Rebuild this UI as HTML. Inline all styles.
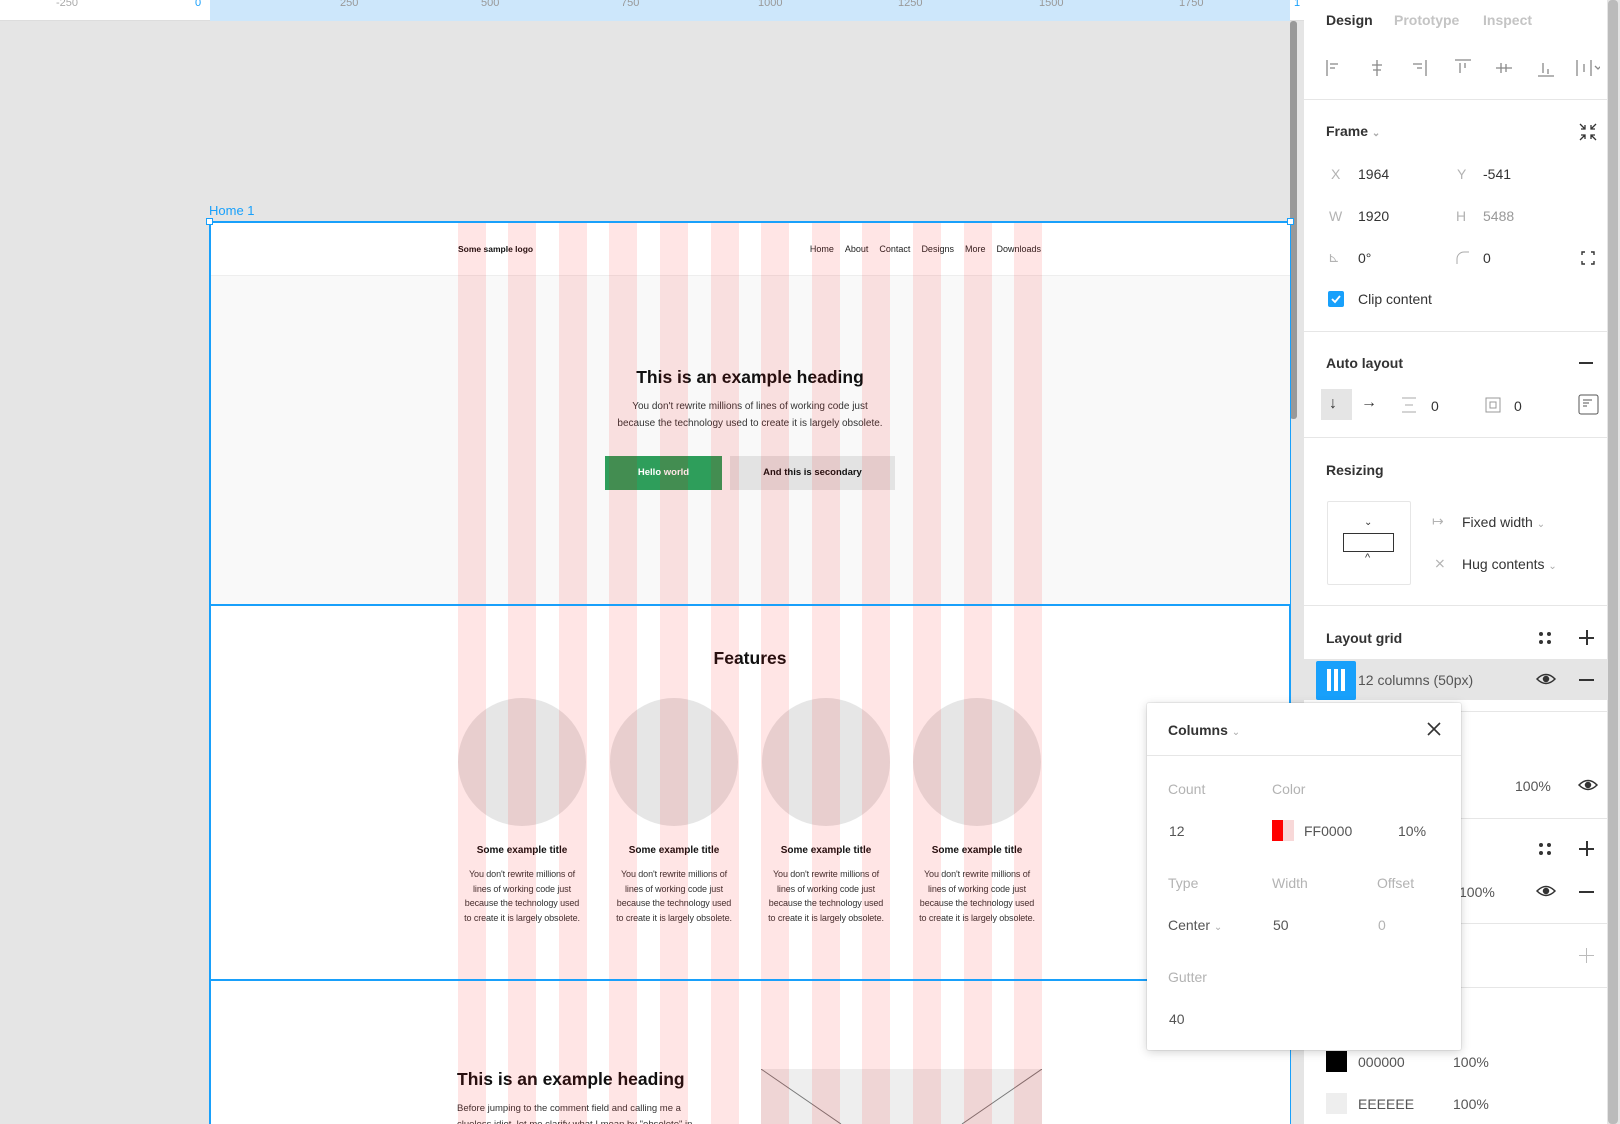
<!DOCTYPE html>
<html><head><meta charset="utf-8"><style>
*{margin:0;padding:0;box-sizing:border-box}
html,body{width:1620px;height:1124px;overflow:hidden;background:#e5e5e5}
body{font-family:"Liberation Sans",sans-serif}
#r{position:relative;width:1620px;height:1124px;overflow:hidden}
.a{position:absolute;white-space:nowrap}
.p{font-size:14px;color:#333}
.l{color:#b3b3b3}
.hr{position:absolute;left:1304px;width:303px;height:1px;background:#e6e6e6}
.col{position:absolute;top:221px;height:903px;width:28px;background:rgba(255,0,0,0.1)}
.ft{font-size:10px;font-weight:bold;color:#111;text-align:center;width:130px}
.fd{font-size:9px;color:#333;text-align:center;width:136px;line-height:14.5px;letter-spacing:-0.1px}
.nav span{margin-left:11px}
</style></head><body><div id="r">
<div class="a" style="left:0;top:0;width:1304px;height:21px;background:#fff;border-bottom:1px solid #ddd"></div>
<div class="a" style="left:210px;top:0;width:1080px;height:21px;background:#cde7fb"></div>
<div class="a" style="top:-3px;left:56px;font-size:11px;color:#aaa">-250</div>
<div class="a" style="top:-3px;left:195px;font-size:11px;color:#18a0fb">0</div>
<div class="a" style="top:-3px;left:340px;font-size:11px;color:#999">250</div>
<div class="a" style="top:-3px;left:481px;font-size:11px;color:#999">500</div>
<div class="a" style="top:-3px;left:621px;font-size:11px;color:#999">750</div>
<div class="a" style="top:-3px;left:758px;font-size:11px;color:#999">1000</div>
<div class="a" style="top:-3px;left:898px;font-size:11px;color:#999">1250</div>
<div class="a" style="top:-3px;left:1039px;font-size:11px;color:#999">1500</div>
<div class="a" style="top:-3px;left:1179px;font-size:11px;color:#999">1750</div>
<div class="a" style="top:-3px;left:1294px;font-size:11px;color:#18a0fb">1</div>
<div class="a" style="left:1290px;top:21px;width:7px;height:398px;background:#999;border-radius:3px"></div>

<div class="a" style="left:209px;top:203px;font-size:13px;color:#18a0fb">Home 1</div>
<div class="a" style="left:210px;top:221px;width:1080px;height:903px;background:#fff"></div>
<div class="a" style="left:210px;top:275px;width:1080px;height:329px;background:#f9f9f9;border-top:1px solid #eee"></div>
<div class="a" style="left:458px;top:244px;font-size:8.5px;font-weight:bold;color:#111">Some sample logo</div>
<div class="a nav" style="right:579px;top:244px;font-size:9px;color:#222">Home<span>About</span><span>Contact</span><span>Designs</span><span>More</span><span>Downloads</span></div>
<div class="a" style="left:550px;top:367px;width:400px;text-align:center;font-size:17.5px;font-weight:bold;color:#111">This is an example heading</div>
<div class="a" style="left:550px;top:399px;width:400px;text-align:center;font-size:10px;color:#333;line-height:16.5px">You don't rewrite millions of lines of working code just<br>because the technology used to create it is largely obsolete.</div>
<div class="a" style="left:605px;top:456px;width:117px;height:34px;background:#2e9e5b;color:#fff;font-size:9.5px;font-weight:bold;text-align:center;line-height:34px">Hello world</div>
<div class="a" style="left:730px;top:456px;width:165px;height:34px;background:#e3e3e3;color:#111;font-size:9.5px;font-weight:bold;text-align:center;line-height:34px">And this is secondary</div>

<div class="a" style="left:550px;top:648px;width:400px;text-align:center;font-size:17.5px;font-weight:bold;color:#111">Features</div>
<div class="a" style="left:458px;top:698px;width:128px;height:128px;border-radius:50%;background:#e6e6e6"></div>
<div class="a" style="left:610px;top:698px;width:128px;height:128px;border-radius:50%;background:#e6e6e6"></div>
<div class="a" style="left:762px;top:698px;width:128px;height:128px;border-radius:50%;background:#e6e6e6"></div>
<div class="a" style="left:913px;top:698px;width:128px;height:128px;border-radius:50%;background:#e6e6e6"></div>
<div class="a ft" style="left:457px;top:845px">Some example title</div>
<div class="a ft" style="left:609px;top:845px">Some example title</div>
<div class="a ft" style="left:761px;top:845px">Some example title</div>
<div class="a ft" style="left:912px;top:845px">Some example title</div>
<div class="a fd" style="left:454px;top:867px">You don't rewrite millions of<br>lines of working code just<br>because the technology used<br>to create it is largely obsolete.</div>
<div class="a fd" style="left:606px;top:867px">You don't rewrite millions of<br>lines of working code just<br>because the technology used<br>to create it is largely obsolete.</div>
<div class="a fd" style="left:758px;top:867px">You don't rewrite millions of<br>lines of working code just<br>because the technology used<br>to create it is largely obsolete.</div>
<div class="a fd" style="left:909px;top:867px">You don't rewrite millions of<br>lines of working code just<br>because the technology used<br>to create it is largely obsolete.</div>

<div class="a" style="left:457px;top:1069px;font-size:17.5px;font-weight:bold;color:#111">This is an example heading</div>
<div class="a" style="left:457px;top:1101px;height:23px;overflow:hidden;font-size:9.5px;color:#333;line-height:16px">Before jumping to the comment field and calling me a<br>clueless idiot, let me clarify what I mean by "obsolete" in</div>
<div class="a" style="left:761px;top:1069px;width:281px;height:55px;background:#eee;overflow:hidden">
<svg width="281" height="55"><line x1="0" y1="0" x2="80" y2="55" stroke="#777"/><line x1="281" y1="0" x2="201" y2="55" stroke="#777"/></svg></div>

<div class="col" style="left:457.5px"></div><div class="col" style="left:508.1px"></div><div class="col" style="left:558.7px"></div><div class="col" style="left:609.3px"></div><div class="col" style="left:659.9px"></div><div class="col" style="left:710.5px"></div><div class="col" style="left:761.1px"></div><div class="col" style="left:811.7px"></div><div class="col" style="left:862.3px"></div><div class="col" style="left:912.9px"></div><div class="col" style="left:963.5px"></div><div class="col" style="left:1014px"></div>

<div class="a" style="left:209px;top:221px;width:1.5px;height:903px;background:#18a0fb"></div>
<div class="a" style="left:1289.5px;top:221px;width:1.5px;height:903px;background:#18a0fb"></div>
<div class="a" style="left:209px;top:221px;width:1082px;height:1.5px;background:#18a0fb"></div>
<div class="a" style="left:209px;top:604px;width:1082px;height:377px;border:2px solid #18a0fb"></div>
<div class="a" style="left:206px;top:218px;width:7px;height:7px;background:#fff;border:1px solid #18a0fb"></div>
<div class="a" style="left:1287px;top:218px;width:7px;height:7px;background:#fff;border:1px solid #18a0fb"></div>

<div class="a" style="left:1304px;top:0;width:303px;height:1124px;background:#fff"></div>
<div class="a" style="left:1607px;top:0;width:13px;height:1124px;background:#e5e5e5"></div>
<div class="a" style="left:1608px;top:0;width:10px;height:1124px;background:#bbb;border-radius:4px"></div>
<div class="a p" style="left:1326px;top:12px;font-weight:bold">Design</div>
<div class="a p l" style="left:1394px;top:12px;font-weight:bold;color:#c4c4c4">Prototype</div>
<div class="a p l" style="left:1483px;top:12px;font-weight:bold;color:#c4c4c4">Inspect</div>
<svg class="a" style="left:1320px;top:56px" width="280" height="24" fill="none" stroke="#888" stroke-width="1.3">
<path d="M7 4v16M10 8h8M10 12h5"/><path d="M57 4v16M52 9h10M53 14h8"/><path d="M106 4v16M93 8h9M97 12h5"/>
<path d="M135 4h16M140 7v10M145 7v5"/><path d="M176 12h16M181 7v10M186 8v8"/><path d="M218 20h16M223 7v10M228 13v5"/>
<path d="M257 4v16M271 4v16M264 8v8M275 10l3 3 3-3"/></svg>
<div class="hr" style="top:99px"></div>
<div class="a p" style="left:1326px;top:123px;font-weight:bold">Frame <span style="color:#aaa;font-size:10px">&#8964;</span></div>
<svg class="a" style="left:1578px;top:122px" width="20" height="20" stroke="#333" stroke-width="1.3" fill="none"><path d="M2 2l5 5M7 3v4H3M18 2l-5 5M13 3v4h4M2 18l5-5M3 13h4v4M18 18l-5-5M17 13h-4v4"/></svg>
<div class="a p l" style="left:1331px;top:166px">X</div><div class="a p" style="left:1358px;top:166px">1964</div>
<div class="a p l" style="left:1457px;top:166px">Y</div><div class="a p" style="left:1483px;top:166px">-541</div>
<div class="a p l" style="left:1329px;top:208px">W</div><div class="a p" style="left:1358px;top:208px">1920</div>
<div class="a p l" style="left:1456px;top:208px">H</div><div class="a p l" style="left:1483px;top:208px;color:#999">5488</div>
<div class="a p l" style="left:1328px;top:249px">⊾</div><div class="a p" style="left:1358px;top:250px">0°</div>
<svg class="a" style="left:1456px;top:251px" width="14" height="14" stroke="#aaa" fill="none"><path d="M1 13V8a7 7 0 0 1 7-7h5"/></svg><div class="a p" style="left:1483px;top:250px">0</div>
<svg class="a" style="left:1581px;top:251px" width="14" height="14" stroke="#333" stroke-width="1.4" fill="none"><path d="M1 4V1h3M10 1h3v3M13 10v3h-3M4 13H1v-3"/></svg>
<div class="a" style="left:1328px;top:291px;width:16px;height:16px;background:#18a0fb;border-radius:2px"><svg width="16" height="16"><path d="M4 8l3 3 5-6" stroke="#fff" stroke-width="1.8" fill="none"/></svg></div>
<div class="a p" style="left:1358px;top:291px">Clip content</div>
<div class="hr" style="top:331px"></div>
<div class="a p" style="left:1326px;top:355px;font-weight:bold">Auto layout</div>
<div class="a" style="left:1579px;top:362px;width:14px;height:1.5px;background:#333"></div>
<div class="a" style="left:1321px;top:389px;width:31px;height:31px;background:#e5e5e5"></div>
<div class="a p" style="left:1329px;top:395px;font-size:16px">↓</div>
<div class="a p" style="left:1361px;top:394px;font-size:16px">→</div>
<svg class="a" style="left:1400px;top:396px" width="18" height="18" stroke="#aaa" fill="none"><path d="M2 2h14M2 16h14M5 9h8"/></svg>
<div class="a p" style="left:1431px;top:398px">0</div>
<svg class="a" style="left:1485px;top:397px" width="16" height="16" stroke="#999" fill="none"><rect x="1" y="1" width="14" height="14"/><rect x="5" y="5" width="6" height="6"/></svg>
<div class="a p" style="left:1514px;top:398px">0</div>
<svg class="a" style="left:1578px;top:394px" width="21" height="21" stroke="#555" fill="none"><rect x="1" y="1" width="19" height="19" rx="2"/><path d="M5 6h9M5 9h6M5 12h4"/></svg>
<div class="hr" style="top:437px"></div>
<div class="a p" style="left:1326px;top:462px;font-weight:bold">Resizing</div>
<div class="a" style="left:1327px;top:501px;width:84px;height:84px;border:1px solid #e6e6e6;border-radius:2px"></div>
<div class="a" style="left:1343px;top:533px;width:51px;height:19px;border:1.3px solid #333"></div>
<div class="a" style="left:1364px;top:517px;font-size:10px;color:#333">&#8964;</div>
<div class="a" style="left:1365px;top:552px;font-size:11px;color:#333">^</div>
<div class="a p l" style="left:1432px;top:513px">↦</div>
<div class="a p" style="left:1462px;top:514px">Fixed width <span style="color:#aaa;font-size:10px">&#8964;</span></div>
<div class="a p l" style="left:1434px;top:555px">⨯</div>
<div class="a p" style="left:1462px;top:556px">Hug contents <span style="color:#aaa;font-size:10px">&#8964;</span></div>
<div class="hr" style="top:605px"></div>
<div class="a p" style="left:1326px;top:630px;font-weight:bold">Layout grid</div>
<svg class="a" style="left:1538px;top:631px" width="14" height="14" fill="#333"><circle cx="3" cy="3" r="2"/><circle cx="11" cy="3" r="2"/><circle cx="3" cy="11" r="2"/><circle cx="11" cy="11" r="2"/></svg>
<div class="a" style="left:1579px;top:637px;width:15px;height:1.5px;background:#333"></div><div class="a" style="left:1586px;top:630px;width:1.5px;height:15px;background:#333"></div>
<div class="a" style="left:1304px;top:659px;width:303px;height:41px;background:#e5e5e5"></div>
<div class="a" style="left:1316px;top:661px;width:40px;height:39px;background:#18a0fb;border-radius:2px"></div>
<div class="a" style="left:1327px;top:669px;width:4px;height:22px;background:#fff"></div><div class="a" style="left:1334px;top:669px;width:4px;height:22px;background:#fff"></div><div class="a" style="left:1341px;top:669px;width:4px;height:22px;background:#fff"></div>
<div class="a p" style="left:1358px;top:672px;color:#555">12 columns (50px)</div>
<svg class="a" style="left:1536px;top:672px" width="20" height="14" stroke="#333" stroke-width="1.5" fill="none"><path d="M1 7q9-9 18 0q-9 9-18 0z"/><circle cx="10" cy="7" r="2.5" fill="#333"/></svg>
<div class="a" style="left:1579px;top:679px;width:15px;height:1.5px;background:#333"></div>
<div class="hr" style="top:711px"></div>
<div class="a p" style="left:1515px;top:778px;color:#555">100%</div>
<svg class="a" style="left:1578px;top:778px" width="20" height="14" stroke="#333" stroke-width="1.5" fill="none"><path d="M1 7q9-9 18 0q-9 9-18 0z"/><circle cx="10" cy="7" r="2.5" fill="#333"/></svg>
<div class="hr" style="top:818px"></div>
<svg class="a" style="left:1538px;top:842px" width="14" height="14" fill="#333"><circle cx="3" cy="3" r="2"/><circle cx="11" cy="3" r="2"/><circle cx="3" cy="11" r="2"/><circle cx="11" cy="11" r="2"/></svg>
<div class="a" style="left:1579px;top:848px;width:15px;height:1.5px;background:#333"></div><div class="a" style="left:1586px;top:841px;width:1.5px;height:15px;background:#333"></div>
<div class="a p" style="left:1459px;top:884px;color:#555">100%</div>
<svg class="a" style="left:1536px;top:884px" width="20" height="14" stroke="#333" stroke-width="1.5" fill="none"><path d="M1 7q9-9 18 0q-9 9-18 0z"/><circle cx="10" cy="7" r="2.5" fill="#333"/></svg>
<div class="a" style="left:1579px;top:891px;width:15px;height:1.5px;background:#333"></div>
<div class="hr" style="top:923px"></div>
<div class="a" style="left:1579px;top:955px;width:15px;height:1px;background:#bbb"></div><div class="a" style="left:1586px;top:948px;width:1px;height:15px;background:#bbb"></div>
<div class="hr" style="top:987px"></div>
<div class="a" style="left:1326px;top:1051px;width:21px;height:21px;background:#000"></div>
<div class="a p" style="left:1358px;top:1054px;color:#555">000000</div><div class="a p" style="left:1453px;top:1054px;color:#555">100%</div>
<div class="a" style="left:1326px;top:1093px;width:21px;height:21px;background:#eee"></div>
<div class="a p" style="left:1358px;top:1096px;color:#555">EEEEEE</div><div class="a p" style="left:1453px;top:1096px;color:#555">100%</div>

<div class="a" style="left:1147px;top:703px;width:314px;height:347px;background:#fff;border-radius:2px;box-shadow:0 2px 10px rgba(0,0,0,0.18),0 0 0 1px rgba(0,0,0,0.06)"></div>
<div class="a p" style="left:1168px;top:722px;font-weight:bold">Columns <span style="color:#aaa;font-size:10px;font-weight:normal">&#8964;</span></div>
<svg class="a" style="left:1426px;top:721px" width="16" height="16" stroke="#333" stroke-width="1.6"><path d="M2 2l12 12M14 2L2 14"/></svg>
<div class="a" style="left:1147px;top:755px;width:314px;height:1px;background:#e6e6e6"></div>
<div class="a p l" style="left:1168px;top:781px">Count</div><div class="a p l" style="left:1272px;top:781px">Color</div>
<div class="a p" style="left:1169px;top:823px;color:#555">12</div>
<div class="a" style="left:1272px;top:820px;width:11px;height:21px;background:#f00"></div>
<div class="a" style="left:1283px;top:820px;width:11px;height:21px;background:#f8d8d8"></div>
<div class="a p" style="left:1304px;top:823px;color:#555">FF0000</div><div class="a p" style="left:1398px;top:823px;color:#555">10%</div>
<div class="a p l" style="left:1168px;top:875px">Type</div><div class="a p l" style="left:1272px;top:875px">Width</div><div class="a p l" style="left:1377px;top:875px">Offset</div>
<div class="a p" style="left:1168px;top:917px;color:#555">Center <span style="color:#aaa;font-size:10px">&#8964;</span></div>
<div class="a p" style="left:1273px;top:917px;color:#555">50</div><div class="a p l" style="left:1378px;top:917px">0</div>
<div class="a p l" style="left:1168px;top:969px">Gutter</div>
<div class="a p" style="left:1169px;top:1011px;color:#555">40</div>
</div></body></html>
